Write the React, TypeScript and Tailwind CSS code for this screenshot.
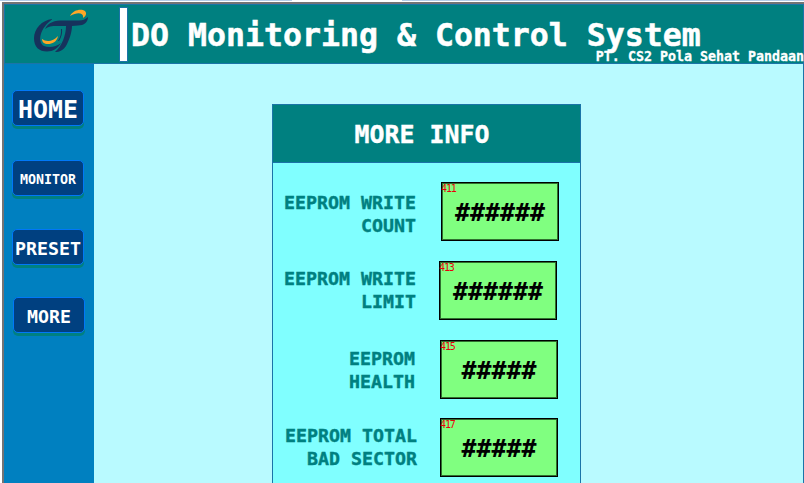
import React from 'react';

const mono = "font-['DejaVu_Sans_Mono',monospace] font-bold whitespace-pre";

function Logo() {
  return (
    <svg className="ml-[26px] mt-[4px] h-[45px] w-[58px] shrink-0" viewBox="30 9 58 45" fill="none">
      <path d="M51 19C41 20 33 29 33 38C33 47 38 51.5 46 51.5C52 51.5 57 48 60 43C55 47 48 48 43 46C36 42 39 28 51 19.500Z" fill="#16325c" />
      <path d="M44 29C47 22 54 20.500 62 20.500L78 20.500C82 20.500 84 19.500 87 17C87 22 83 25.500 77 25.500L71 26C71 32 68 41 65 46C62 50 59 52 54 52C61 46 65 35 65 26L56 26C51 26 47 26.500 44 29Z" fill="#16325c" />
      <path d="M60.500 29C61 33 60 37 57.500 41" stroke="#16325c" strokeWidth="1" />
      <path d="M41 39C45 42 52 42 57 36C56 42 51 44 47 44C43 44 41 42 41 39Z" fill="#ffa726" />
      <path d="M69 16C72 10 80 8.500 84 11C86 13 85 16 82 18C83 13 77 11.500 69 16Z" fill="#ffa726" />
    </svg>
  );
}

function NavButton({ label, className }: { label: string; className: string }) {
  return (
    <div className={`${mono} ${className} flex h-[36px] w-[72px] shrink-0 items-center justify-center rounded-[5px] border border-[#0078f8] bg-[#004080] text-white shadow-[0_3px_0_#008080]`}>
      {label}
    </div>
  );
}

function Row({ lines, tag, value, className, label, box }: { lines: string[]; tag: string; value: string; className: string; label: string; box: string }) {
  return (
    <div className={`flex h-[59px] shrink-0 ${className}`}>
      <div className={`${mono} ${label} shrink-0 text-right text-[18.27px] leading-[23px] text-[#008080] [-webkit-text-stroke:0.4px_#008080]`}>
        {lines.map((l) => <div key={l}>{l}</div>)}
      </div>
      <div className={`${mono} ${box} relative flex h-[59px] w-[118px] shrink-0 items-center justify-center border border-black bg-[#80ff80] text-[24.9px] text-black outline-1 -outline-offset-2 outline-[#307030]`}>
        <span className="absolute left-[-1px] top-0 text-[10px] font-normal leading-[12px] tracking-[-1.1px] text-red-600">{tag}</span>
        <span className="pt-[2px] leading-[30px]">{value}</span>
      </div>
    </div>
  );
}

export default function App() {
  return (
    <div className="flex h-[483px] w-[804px] flex-col overflow-hidden bg-white">
      <div className="flex h-[1px] shrink-0 bg-[#b5cce8]">
        <div className="ml-[292px] h-full w-[110px] bg-white" />
      </div>
      <div className="ml-[2px] mt-[1px] flex min-h-0 flex-1 flex-col border-l-2 border-t-2 border-[#747474]">
        <header className="flex h-[60px] shrink-0 border border-[#1b74a8] bg-[#008080]">
          <Logo />
          <div className="ml-[30px] mt-[2px] h-[55px] w-[9px] shrink-0 border border-[#1b74a8] bg-white" />
          <div className="flex min-w-0 flex-1 flex-col text-white">
            <h1 className={`${mono} ml-[3px] mt-[11px] h-[30px] text-[31.55px] leading-[38px] [-webkit-text-stroke:0.5px_white]`}>DO Monitoring &amp; Control System</h1>
            <p className={`${mono} -mr-[1px] mt-[3px] text-right text-[13.3px] leading-[16px] [-webkit-text-stroke:0.3px_white]`}>PT. CS2 Pola Sehat Pandaan</p>
          </div>
        </header>
        <div className="flex min-h-0 flex-1">
          <nav className="flex w-[90px] shrink-0 flex-col bg-[#0080c0] pl-[8px] pt-[26px]">
            <NavButton label="HOME" className="pt-[4px] text-[24.9px]" />
            <NavButton label="MONITOR" className="mt-[34px] pt-[4px] text-[13.3px]" />
            <NavButton label="PRESET" className="mt-[33px] pt-[4px] text-[18.27px]" />
            <NavButton label="MORE" className="ml-[1px] mt-[32px] pt-[4px] text-[18.27px]" />
          </nav>
          <main className="flex min-w-0 flex-1 border-r border-[#1b74a8] bg-[#b9faff] pl-[178px] pt-[40px]">
            <section className="flex h-[420px] w-[309px] shrink-0 flex-col border border-[#1b74a8] bg-[#80ffff]">
              <h2 className={`${mono} flex h-[58px] shrink-0 items-center justify-center border-b border-[#1b74a8] bg-[#008080] pr-[9px] pt-[2px] text-[24.9px] text-white [-webkit-text-stroke:0.4px_white]`}>MORE INFO</h2>
              <Row lines={['EEPROM WRITE', 'COUNT']} tag="411" value="######" className="mt-[19px]" label="w-[143px] pt-[9px]" box="ml-[25px]" />
              <Row lines={['EEPROM WRITE', 'LIMIT']} tag="413" value="######" className="mt-[20px]" label="w-[143px] pt-[6px]" box="ml-[23px]" />
              <Row lines={['EEPROM', 'HEALTH']} tag="415" value="#####" className="mt-[20px]" label="w-[142px] pt-[7px]" box="ml-[25px]" />
              <Row lines={['EEPROM TOTAL', 'BAD SECTOR']} tag="417" value="#####" className="mt-[19px]" label="w-[144px] pt-[6px]" box="ml-[23px]" />
            </section>
          </main>
        </div>
      </div>
    </div>
  );
}
